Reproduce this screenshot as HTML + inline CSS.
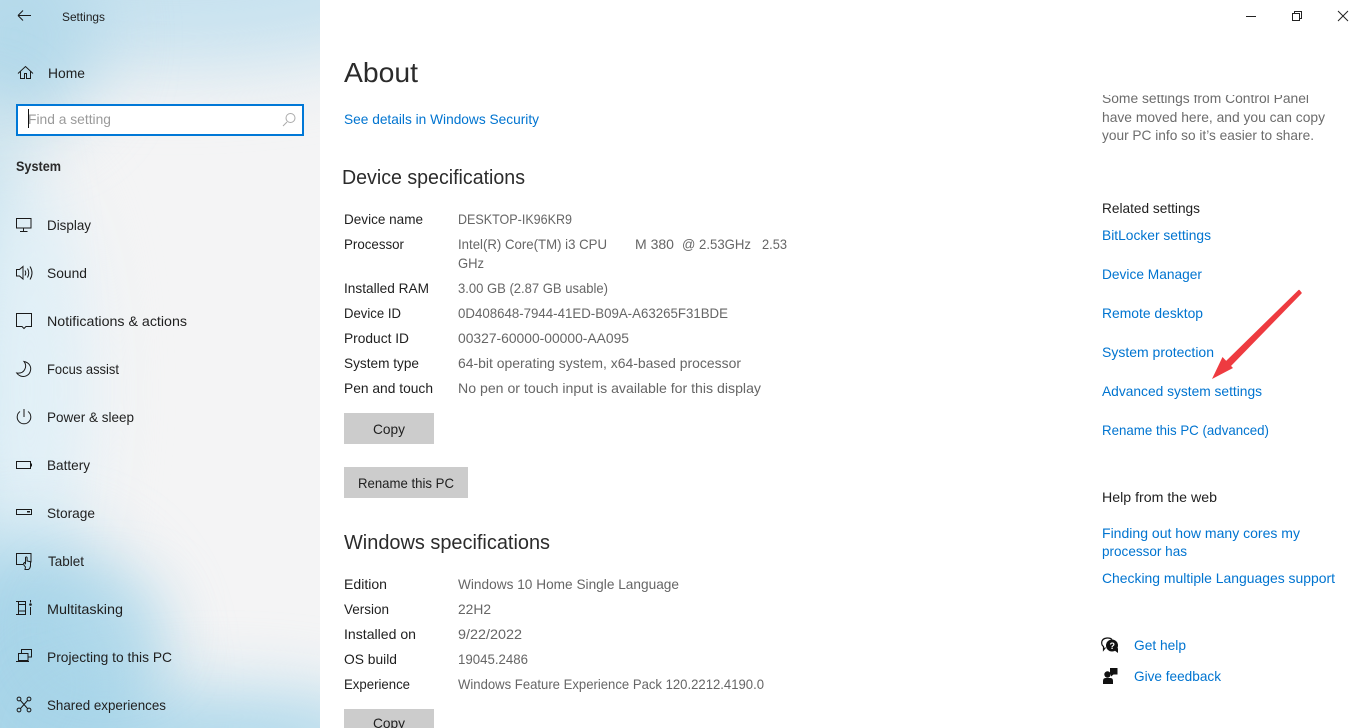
<!DOCTYPE html>
<html lang="en"><head><meta charset="utf-8"><title>Settings</title>
<style>
html,body{margin:0;padding:0;width:1366px;height:728px;overflow:hidden;background:#fff}
#side{position:absolute;left:0;top:0;width:320px;height:728px;overflow:hidden;background:#f4f4f5}
.b{position:absolute;border-radius:50%;filter:blur(36px)}
svg{position:absolute;left:0;top:0}
text{font-family:"Liberation Sans",sans-serif;font-size:14px;fill:#1f1f1f}
.v{fill:#666}.l{fill:#0074d0}.g{fill:#6c6c6c}
.i{fill:none;stroke:#1a1a1a;stroke-width:1}
</style></head><body>
<div id="side">
<div class="b" style="left:-100px;top:-90px;width:540px;height:160px;background:#c8e2ef"></div>
<div class="b" style="left:-70px;top:-60px;width:170px;height:190px;background:#b4d9ea"></div>
<div class="b" style="left:-65px;top:100px;width:90px;height:560px;background:#b5dbeb"></div>
<div class="b" style="left:-30px;top:180px;width:120px;height:420px;background:#e2f0f7"></div>
<div class="b" style="left:-90px;top:540px;width:250px;height:290px;background:#a8d5e9"></div>
<div class="b" style="left:40px;top:695px;width:360px;height:90px;background:#a9d6ea"></div>
<div class="b" style="left:60px;top:600px;width:90px;height:60px;background:#b4dbec"></div>
</div>
<svg width="1366" height="728" viewBox="0 0 1366 728">
<defs><clipPath id="c"><rect x="1090" y="95" width="270" height="40"/></clipPath></defs>
<path class="i" d="M18 15.500H31M18 15.500l5-5M18 15.500l5 5"/>
<text x="62" y="21" style="font-size:12px" textLength="43" lengthAdjust="spacingAndGlyphs">Settings</text>
<path class="i" d="M18 73.500l7.500-7 7.500 7M20.500 71.500v7h4v-5h2v5h4v-7"/>
<text x="48" y="78" textLength="37" lengthAdjust="spacingAndGlyphs">Home</text>
<rect x="17" y="105" width="286" height="30" fill="#fff" stroke="#0078d7" stroke-width="2"/>
<rect x="28" y="109" width="1" height="19" fill="#111"/>
<text x="28" y="124" style="fill:#9a9a9a" textLength="83" lengthAdjust="spacingAndGlyphs">Find a setting</text>
<circle cx="290.500" cy="118" r="4.500" fill="none" stroke="#aaa"/><path d="M287 122l-4 4" stroke="#aaa" fill="none"/>
<text x="16" y="171" style="font-weight:700;fill:#2a2a2a" textLength="45" lengthAdjust="spacingAndGlyphs">System</text>

<path class="i" d="M16.500 218.500h14.500v9.500H16.500zM23.500 228v3M20 231.500h7.500"/>
<text x="47" y="230" textLength="44" lengthAdjust="spacingAndGlyphs">Display</text>
<path class="i" d="M16.500 269.500h3l3.500-3v12.500l-3.500-3h-3zM25 270.500q1.500 2.500 0 5M27.500 268.500q2.500 4.500 0 9M30 266.500q4 6.500 0 13"/>
<text x="47" y="278" textLength="40" lengthAdjust="spacingAndGlyphs">Sound</text>
<path class="i" d="M16.500 313.500h15v13h-5.500l-2 2-2-2h-5.500z"/>
<text x="47" y="326" textLength="140" lengthAdjust="spacingAndGlyphs">Notifications &amp; actions</text>
<path class="i" d="M24 361.500c5 1 7.500 5 6.500 9-1 5-6 7-10 5.500-2-.8-3-1.800-3.800-3 3.300.5 6.500-.5 8-3.500 1.500-2.800 1-5.800-.7-8z"/>
<text x="47" y="374" textLength="72" lengthAdjust="spacingAndGlyphs">Focus assist</text>
<path class="i" d="M20 411.500a6.800 6.800 0 1 0 8 0M24 409v8"/>
<text x="47" y="422" textLength="87" lengthAdjust="spacingAndGlyphs">Power &amp; sleep</text>
<path class="i" d="M16.500 461.500h14v7h-14z"/><path d="M31 463.500h1v3h-1z" fill="#1a1a1a"/>
<text x="47" y="470" textLength="43" lengthAdjust="spacingAndGlyphs">Battery</text>
<path class="i" d="M16.500 509.500h15v5h-15z"/><path d="M27 511h3v1.500h-3z" fill="#1a1a1a"/>
<text x="47" y="518" textLength="48" lengthAdjust="spacingAndGlyphs">Storage</text>
<path class="i" d="M23 564.500h-6.500v-11h14.500v9M25.500 567q-2-2-2-3.500l1-1 1 1v-6q.8-1.200 1.600 0v3.500l3.400.7v4.300q-.5 2.500-2 3.500h-3.500z"/>
<text x="48" y="566" textLength="36" lengthAdjust="spacingAndGlyphs">Tablet</text>
<path class="i" d="M16 601.500h10M16 614.500h10M18.500 604.500h7v6.500h-7zM18.500 601.500v3M25.500 601.500v3M18.500 611v3.500M25.500 611v3.500M30.500 600v2.500M30.500 607v8"/><circle cx="30.500" cy="604.500" r="1.300" fill="#1a1a1a"/>
<text x="47" y="614" textLength="76" lengthAdjust="spacingAndGlyphs">Multitasking</text>
<path class="i" d="M21.500 653v-3.500h10v7.500h-3.500M18.500 653.500h9.500v7h-9.500zM16 661.500h13"/>
<text x="47" y="662" textLength="125" lengthAdjust="spacingAndGlyphs">Projecting to this PC</text>
<g class="i"><circle cx="19" cy="699" r="1.900"/><circle cx="29" cy="699" r="1.900"/><circle cx="19" cy="710" r="1.900"/><circle cx="29" cy="710" r="1.900"/><path d="M20.500 700.500l7 8M27.500 700.500l-7 8"/></g>
<text x="47" y="710" textLength="119" lengthAdjust="spacingAndGlyphs">Shared experiences</text>

<text x="344" y="82" style="font-size:28px;fill:#2b2b2b" textLength="74" lengthAdjust="spacingAndGlyphs">About</text>
<text class="l" x="344" y="124" textLength="195" lengthAdjust="spacingAndGlyphs">See details in Windows Security</text>
<text x="342" y="184" style="font-size:20px;fill:#2b2b2b" textLength="183" lengthAdjust="spacingAndGlyphs">Device specifications</text>

<text x="344" y="224" textLength="79" lengthAdjust="spacingAndGlyphs">Device name</text><text class="v" x="458" y="224" textLength="114" lengthAdjust="spacingAndGlyphs">DESKTOP-IK96KR9</text>
<text x="344" y="249" textLength="60" lengthAdjust="spacingAndGlyphs">Processor</text>
<text class="v" x="458" y="249" textLength="149" lengthAdjust="spacingAndGlyphs">Intel(R) Core(TM) i3 CPU</text>
<text class="v" x="635" y="249" textLength="39" lengthAdjust="spacingAndGlyphs">M 380</text>
<text class="v" x="682" y="249" textLength="69" lengthAdjust="spacingAndGlyphs">@ 2.53GHz</text>
<text class="v" x="762" y="249" textLength="25" lengthAdjust="spacingAndGlyphs">2.53</text>
<text class="v" x="458" y="268" textLength="26" lengthAdjust="spacingAndGlyphs">GHz</text>
<text x="344" y="293" textLength="85" lengthAdjust="spacingAndGlyphs">Installed RAM</text><text class="v" x="458" y="293" textLength="150" lengthAdjust="spacingAndGlyphs">3.00 GB (2.87 GB usable)</text>
<text x="344" y="318" textLength="57" lengthAdjust="spacingAndGlyphs">Device ID</text><text class="v" x="458" y="318" textLength="270" lengthAdjust="spacingAndGlyphs">0D408648-7944-41ED-B09A-A63265F31BDE</text>
<text x="344" y="343" textLength="65" lengthAdjust="spacingAndGlyphs">Product ID</text><text class="v" x="458" y="343" textLength="171" lengthAdjust="spacingAndGlyphs">00327-60000-00000-AA095</text>
<text x="344" y="368" textLength="75" lengthAdjust="spacingAndGlyphs">System type</text><text class="v" x="458" y="368" textLength="283" lengthAdjust="spacingAndGlyphs">64-bit operating system, x64-based processor</text>
<text x="344" y="393" textLength="89" lengthAdjust="spacingAndGlyphs">Pen and touch</text><text class="v" x="458" y="393" textLength="303" lengthAdjust="spacingAndGlyphs">No pen or touch input is available for this display</text>

<rect x="344" y="413" width="90" height="31" fill="#ccc"/>
<text x="373" y="434" textLength="32" lengthAdjust="spacingAndGlyphs">Copy</text>
<rect x="344" y="467" width="124" height="31" fill="#ccc"/>
<text x="358" y="488" textLength="96" lengthAdjust="spacingAndGlyphs">Rename this PC</text>

<text x="344" y="549" style="font-size:20px;fill:#2b2b2b" textLength="206" lengthAdjust="spacingAndGlyphs">Windows specifications</text>
<text x="344" y="589" textLength="43" lengthAdjust="spacingAndGlyphs">Edition</text><text class="v" x="458" y="589" textLength="221" lengthAdjust="spacingAndGlyphs">Windows 10 Home Single Language</text>
<text x="344" y="614" textLength="45" lengthAdjust="spacingAndGlyphs">Version</text><text class="v" x="458" y="614" textLength="33" lengthAdjust="spacingAndGlyphs">22H2</text>
<text x="344" y="639" textLength="72" lengthAdjust="spacingAndGlyphs">Installed on</text><text class="v" x="458" y="639" textLength="64" lengthAdjust="spacingAndGlyphs">9/22/2022</text>
<text x="344" y="664" textLength="53" lengthAdjust="spacingAndGlyphs">OS build</text><text class="v" x="458" y="664" textLength="70" lengthAdjust="spacingAndGlyphs">19045.2486</text>
<text x="344" y="689" textLength="66" lengthAdjust="spacingAndGlyphs">Experience</text><text class="v" x="458" y="689" textLength="306" lengthAdjust="spacingAndGlyphs">Windows Feature Experience Pack 120.2212.4190.0</text>
<rect x="344" y="709" width="90" height="19" fill="#ccc"/>
<text x="373" y="728" textLength="32" lengthAdjust="spacingAndGlyphs">Copy</text>

<path d="M1246 16.500h10" stroke="#222" fill="none"/>
<path d="M1292.500 13.500h7v7h-7zM1294.500 13.500v-2h7v7h-2" stroke="#222" fill="none"/>
<path d="M1338 11l10 10M1348 11l-10 10" stroke="#222" fill="none"/>

<g clip-path="url(#c)"><text class="g" x="1102" y="103" textLength="207" lengthAdjust="spacingAndGlyphs">Some settings from Control Panel</text></g>
<text class="g" x="1102" y="122" textLength="223" lengthAdjust="spacingAndGlyphs">have moved here, and you can copy</text>
<text class="g" x="1102" y="140" textLength="212" lengthAdjust="spacingAndGlyphs">your PC info so it’s easier to share.</text>
<text x="1102" y="213" textLength="98" lengthAdjust="spacingAndGlyphs">Related settings</text>
<text class="l" x="1102" y="240" textLength="109" lengthAdjust="spacingAndGlyphs">BitLocker settings</text>
<text class="l" x="1102" y="279" textLength="100" lengthAdjust="spacingAndGlyphs">Device Manager</text>
<text class="l" x="1102" y="318" textLength="101" lengthAdjust="spacingAndGlyphs">Remote desktop</text>
<text class="l" x="1102" y="357" textLength="112" lengthAdjust="spacingAndGlyphs">System protection</text>
<text class="l" x="1102" y="396" textLength="160" lengthAdjust="spacingAndGlyphs">Advanced system settings</text>
<text class="l" x="1102" y="435" textLength="167" lengthAdjust="spacingAndGlyphs">Rename this PC (advanced)</text>
<text x="1102" y="502" textLength="115" lengthAdjust="spacingAndGlyphs">Help from the web</text>
<text class="l" x="1102" y="538" textLength="198" lengthAdjust="spacingAndGlyphs">Finding out how many cores my</text>
<text class="l" x="1102" y="556" textLength="85" lengthAdjust="spacingAndGlyphs">processor has</text>
<text class="l" x="1102" y="583" textLength="233" lengthAdjust="spacingAndGlyphs">Checking multiple Languages support</text>

<path d="M1105.500 647.500l-2 2.500v-3.500q-1.800-1.200-1.800-3.500 0-4.500 5.300-5 3.500-.2 5 1.500" fill="none" stroke="#111" stroke-width="1.200"/>
<circle cx="1112" cy="645.500" r="6" fill="#111"/><path d="M1114 650l4 3v-5z" fill="#111"/>
<text x="1109.500" y="649" style="font-size:9px;font-weight:700;fill:#fff">?</text>
<text class="l" x="1134" y="650" textLength="52" lengthAdjust="spacingAndGlyphs">Get help</text>
<path d="M1110 668h7.500v6.500h-4l-2.500 2v-2h-1z" fill="#111"/>
<circle cx="1107.500" cy="674.500" r="3.200" fill="#111"/><path d="M1103 684v-3q0-3 2.500-3h5q2.500 0 2.500 3v3z" fill="#111"/>
<text class="l" x="1134" y="681" textLength="87" lengthAdjust="spacingAndGlyphs">Give feedback</text>

<path d="M1299 290.500L1301 293 1229 367 1225 363z" fill="#ee3b40" stroke="#ee3b40" stroke-width="1.500" stroke-linejoin="round"/>
<path d="M1212 379L1222.500 357 1233 368z" fill="#ee3b40"/>
</svg>
</body></html>
